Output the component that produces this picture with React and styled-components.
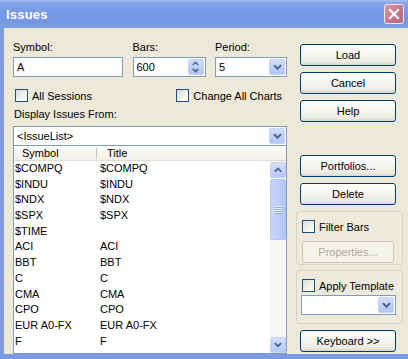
import React from "react";
import styled, { createGlobalStyle, css } from "styled-components";

const Global = createGlobalStyle`
  html, body { margin: 0; padding: 0; background: #ece9d8; }
  body { font-family: "Liberation Sans", Arial, sans-serif; font-size: 11px; color: #000; }
  * { box-sizing: border-box; }
`;

const Window = styled.div`
  width: 408px;
  height: 359px;
  display: flex;
  flex-direction: column;
  background: #ece9d8;
  overflow: hidden;
`;

const TitleBar = styled.div`
  height: 28px;
  flex: none;
  display: flex;
  align-items: center;
  justify-content: space-between;
  padding: 0 4px 0 6px;
  background: linear-gradient(#a9bff0 0px, #86a4ea 3px, #7a9be6 10px, #7597e4 22px, #7f9de4 28px);
`;

const Title = styled.span`
  color: #fff;
  font-weight: bold;
  font-size: 13px;
  letter-spacing: 0.2px;
`;

const CloseBtn = styled.div`
  width: 20px;
  height: 20px;
  border: 1px solid #f4e6ea;
  border-radius: 3px;
  background: linear-gradient(135deg, #d79aa8, #c07486 60%, #b5697c);
  display: flex;
  align-items: center;
  justify-content: center;
`;

const Frame = styled.div`
  flex: 1;
  display: flex;
  border-left: 4px solid #7b9ae2;
  border-bottom: 5px solid #7b9ae2;
  min-height: 0;
`;

const Body = styled.div`
  flex: 1;
  display: flex;
  padding-left: 9px;
  gap: 9px;
  min-height: 0;
`;

const LeftCol = styled.div`
  width: 274px;
  display: flex;
  flex-direction: column;
  padding-top: 12px;
  min-height: 0;
`;

const FieldGrid = styled.div`
  display: grid;
  grid-template-columns: 110px 73px 72px;
  column-gap: 9.5px;
  row-gap: 3px;
`;

const Label = styled.div`
  height: 14px;
  line-height: 14px;
  white-space: nowrap;
  color: ${(p) => (p.disabled ? "#aca899" : "#000")};
`;

const Field = styled.div`
  height: 20px;
  border: 1px solid #7f9db9;
  background: #fff;
  display: flex;
  align-items: stretch;
`;

const FieldText = styled.div`
  flex: 1;
  padding-left: 3px;
  line-height: 18px;
`;

const DropBtn = styled.div`
  width: 16px;
  margin: 1px;
  border-radius: 2px;
  background: linear-gradient(#d2def9, #bccdf6 60%, #b1c5f4);
  border: 1px solid #c3d2f5;
  display: flex;
  align-items: center;
  justify-content: center;
`;

const SpinBtn = styled(DropBtn)`
  flex-direction: column;
  justify-content: space-evenly;
`;

const CheckRow = styled.div`
  display: flex;
  justify-content: space-between;
  margin-top: 12px;
  padding-left: 2px;
  padding-right: 5px;
`;

const Check = styled.label`
  display: flex;
  align-items: center;
  gap: 4px;
  height: 13px;
  white-space: nowrap;
`;

const Box = styled.span`
  width: 13px;
  height: 13px;
  border: 1px solid #1c5180;
  background: linear-gradient(135deg, #dcdbd5, #f7f7f5 70%, #fff);
  flex: none;
`;

const SectionLabel = styled(Label)`
  margin-top: 5px;
  padding-left: 1px;
`;

const Combo = styled(Field)`
  margin-top: 5px;
  width: 274px;
`;

const List = styled.div`
  flex: 1;
  border: 1px solid #7f9db9;
  border-top: none;
  background: #fff;
  display: flex;
  flex-direction: column;
  min-height: 0;
`;

const Header = styled.div`
  height: 15px;
  flex: none;
  display: grid;
  grid-template-columns: 82px 1px 1fr;
  align-items: center;
  background: linear-gradient(#fcfcfb, #f1efe6);
  border-bottom: 1px solid #e2dfd2;
`;

const HeadCell = styled.div`
  padding-left: ${(p) => p.pad}px;
  line-height: 14px;
`;

const HeadSep = styled.div`
  height: 11px;
  background: #c7c5b2;
`;

const ListBody = styled.div`
  flex: 1;
  display: flex;
  min-height: 0;
`;

const Rows = styled.div`
  flex: 1;
  overflow: hidden;
`;

const Row = styled.div`
  display: grid;
  grid-template-columns: 85px 1fr;
  height: 15.7px;
  line-height: 15.7px;
  padding-left: 1px;
  white-space: nowrap;
`;

const Scroll = styled.div`
  width: 16px;
  flex: none;
  display: flex;
  flex-direction: column;
  background: #f7f6f1;
  padding-top: 1px;
`;

const ScrollBtn = styled.div`
  height: 16px;
  border-radius: 2px;
  background: linear-gradient(#d6e1fa, #c0d0f7 60%, #b5c8f4);
  border: 1px solid #c5d3f3;
  display: flex;
  align-items: center;
  justify-content: center;
  flex: none;
`;

const Track = styled.div`
  flex: 1;
  display: flex;
  flex-direction: column;
  padding-top: 1px;
`;

const Thumb = styled.div`
  height: 61px;
  border-radius: 2px;
  border: 1px solid #b5c8f2;
  background: linear-gradient(90deg, #c7d6fa, #bccdf8 60%, #b0c3f3);
  display: flex;
  flex-direction: column;
  align-items: center;
  justify-content: center;
  gap: 1px;
`;

const Grip = styled.div`
  width: 7px;
  height: 1px;
  background: #eef3fe;
  box-shadow: 0 1px 0 #8ca6dc;
`;

const RightCol = styled.div`
  width: 106px;
  display: flex;
  flex-direction: column;
  padding-top: 16px;
`;

const Button = styled.div`
  width: ${(p) => p.w || 96}px;
  height: 22px;
  margin-left: ${(p) => (p.flush ? 0 : 4)}px;
  margin-top: ${(p) => p.mt || 0}px;
  border: 1px solid ${(p) => (p.disabled ? "#c9c7ba" : "#003c74")};
  border-radius: 3px;
  background: ${(p) =>
    p.disabled ? "#f5f4ea" : "linear-gradient(#ffffff, #f5f4ee 50%, #ecebe3 85%, #d9d6c8)"};
  color: ${(p) => (p.disabled ? "#aca899" : "#000")};
  display: flex;
  align-items: center;
  justify-content: center;
`;

const Group = styled.div`
  width: 107px;
  height: 54px;
  margin-top: ${(p) => p.mt}px;
  border: 1px solid #d6d3c2;
  border-radius: 4px;
  background: #eeebdc;
  padding: 8px 0 0 5px;
  display: flex;
  flex-direction: column;
`;

const GroupCombo = styled(Field)`
  width: 95px;
  height: 20px;
  margin-top: 3px;
  margin-left: -1px;
`;

const Chevron = ({ up, size = 9 }) => (
  <svg width={size} height={size * 0.7} viewBox="0 0 9 6">
    <path
      d={up ? "M1 5 L4.5 1.5 L8 5" : "M1 1 L4.5 4.5 L8 1"}
      fill="none"
      stroke="#4d6185"
      strokeWidth="2"
    />
  </svg>
);

const rows = [
  ["$COMPQ", "$COMPQ"],
  ["$INDU", "$INDU"],
  ["$NDX", "$NDX"],
  ["$SPX", "$SPX"],
  ["$TIME", ""],
  ["ACI", "ACI"],
  ["BBT", "BBT"],
  ["C", "C"],
  ["CMA", "CMA"],
  ["CPO", "CPO"],
  ["EUR A0-FX", "EUR A0-FX"],
  ["F", "F"],
];

export default function App() {
  return (
    <>
      <Global />
      <Window>
        <TitleBar>
          <Title>Issues</Title>
          <CloseBtn>
            <svg width="12" height="12" viewBox="0 0 12 12">
              <path d="M2 2 L10 10 M10 2 L2 10" stroke="#fff" strokeWidth="2.2" strokeLinecap="square" />
            </svg>
          </CloseBtn>
        </TitleBar>
        <Frame>
          <Body>
            <LeftCol>
              <FieldGrid>
                <Label>Symbol:</Label>
                <Label>Bars:</Label>
                <Label>Period:</Label>
                <Field>
                  <FieldText>A</FieldText>
                </Field>
                <Field>
                  <FieldText>600</FieldText>
                  <SpinBtn>
                    <Chevron up size={7} />
                    <Chevron size={7} />
                  </SpinBtn>
                </Field>
                <Field>
                  <FieldText>5</FieldText>
                  <DropBtn>
                    <Chevron />
                  </DropBtn>
                </Field>
              </FieldGrid>
              <CheckRow>
                <Check>
                  <Box />
                  All Sessions
                </Check>
                <Check>
                  <Box />
                  Change All Charts
                </Check>
              </CheckRow>
              <SectionLabel>Display Issues From:</SectionLabel>
              <Combo>
                <FieldText>&lt;IssueList&gt;</FieldText>
                <DropBtn>
                  <Chevron />
                </DropBtn>
              </Combo>
              <List>
                <Header>
                  <HeadCell pad={8}>Symbol</HeadCell>
                  <HeadSep />
                  <HeadCell pad={10}>Title</HeadCell>
                </Header>
                <ListBody>
                  <Rows>
                    {rows.map(([s, t], i) => (
                      <Row key={i}>
                        <span>{s}</span>
                        <span>{t}</span>
                      </Row>
                    ))}
                  </Rows>
                  <Scroll>
                    <ScrollBtn>
                      <Chevron up size={8} />
                    </ScrollBtn>
                    <Track>
                      <Thumb>
                        <Grip />
                        <Grip />
                        <Grip />
                        <Grip />
                      </Thumb>
                    </Track>
                    <ScrollBtn>
                      <Chevron size={8} />
                    </ScrollBtn>
                  </Scroll>
                </ListBody>
              </List>
            </LeftCol>
            <RightCol>
              <Button>Load</Button>
              <Button mt={6}>Cancel</Button>
              <Button mt={6}>Help</Button>
              <Button mt={33}>Portfolios...</Button>
              <Button mt={6}>Delete</Button>
              <Group mt={6}>
                <Check>
                  <Box />
                  Filter Bars
                </Check>
                <Button disabled flush w={92} mt={8}>
                  Properties...
                </Button>
              </Group>
              <Group mt={5}>
                <Check>
                  <Box />
                  Apply Template
                </Check>
                <GroupCombo>
                  <FieldText />
                  <DropBtn>
                    <Chevron />
                  </DropBtn>
                </GroupCombo>
              </Group>
              <Button mt={6}>Keyboard &gt;&gt;</Button>
            </RightCol>
          </Body>
        </Frame>
      </Window>
    </>
  );
}
